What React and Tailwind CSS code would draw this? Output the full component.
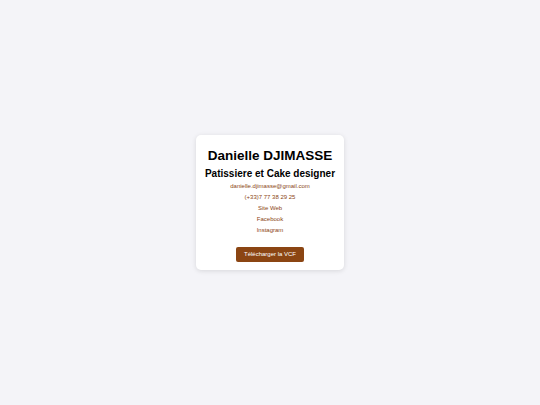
export default function App() {
  const links = ["danielle.djimasse@gmail.com", "(+33)7 77 38 29 25", "Site Web", "Facebook", "Instagram"];
  return (
    <div className="min-h-screen w-full flex items-center justify-center bg-[#f4f4f8]" style={{ fontFamily: '"Liberation Sans", Arial, sans-serif' }}>
      <div className="w-[148px] h-[135px] bg-white rounded-[5px] shadow-[0_1px_5px_rgba(0,0,0,0.12)] flex flex-col items-center pt-[13px]">
        <h1 className="text-[13.5px] leading-[16px] font-bold text-black">Danielle DJIMASSE</h1>
        <h2 className="mt-[4px] text-[10px] leading-[12px] font-bold text-black">Patissiere et Cake designer</h2>
        <div className="mt-[1px] flex flex-col items-center">
          {links.map((l) => (
            <a key={l} className="text-[6px] leading-[11px] text-[#8b4513]">{l}</a>
          ))}
        </div>
        <button className="mt-[11px] w-[68px] h-[15px] rounded-[2px] bg-[#8b4513] text-white text-[6px] leading-[15px]">Télécharger la VCF</button>
      </div>
    </div>
  );
}
